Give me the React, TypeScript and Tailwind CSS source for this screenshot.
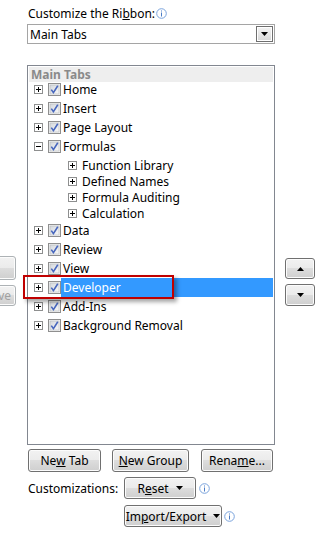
import React from 'react';

const FONT = { fontFamily: '"Segoe UI", "Noto Sans", "Open Sans", sans-serif' };

const InfoIcon = () => (
  <svg width="11" height="11" viewBox="0 0 11 11" className="shrink-0">
    <circle cx="5.5" cy="5.5" r="4.8" fill="#fff" stroke="#7aa3dc" strokeWidth="1" />
    <rect x="5" y="2.5" width="1" height="1" fill="#4a7cc6" />
    <rect x="5" y="4.5" width="1" height="4" fill="#4a7cc6" />
  </svg>
);

const ExpandBox = ({ open = false }: { open?: boolean }) => (
  <svg width="9" height="9" viewBox="0 0 9 9" className="shrink-0">
    <rect x="0.5" y="0.5" width="8" height="8" fill="#fff" stroke="#8e8f8f" />
    <rect x="2" y="4" width="5" height="1" fill="#000" />
    {!open && <rect x="4" y="2" width="1" height="5" fill="#000" />}
  </svg>
);

const CheckBox = () => (
  <svg width="13" height="13" viewBox="0 0 13 13" className="shrink-0">
    <defs>
      <linearGradient id="cbg" x1="0" y1="0" x2="1" y2="1">
        <stop offset="0" stopColor="#d3d7dc" />
        <stop offset="1" stopColor="#f8f8f8" />
      </linearGradient>
    </defs>
    <rect x="0.5" y="0.5" width="12" height="12" fill="#f4f4f4" stroke="#8f8f8f" />
    <rect x="2" y="2" width="9" height="9" fill="url(#cbg)" stroke="#b4b8bd" strokeWidth="0.6" />
    <path d="M3.3 6.6 L5.4 9.6 L9.8 2.8" fill="none" stroke="#4766bd" strokeWidth="1.6" />
  </svg>
);

const Arrow = ({ up = false }: { up?: boolean }) => (
  <svg width="7" height="4" viewBox="0 0 7 4">
    <path d={up ? 'M3.5 0 L7 4 L0 4 Z' : 'M0 0 L7 0 L3.5 4 Z'} fill="#000" />
  </svg>
);

const btnBase =
  'flex items-center justify-center rounded-[3px] border bg-[linear-gradient(#f2f2f2_0%,#ebebeb_49%,#dddddd_50%,#cfcfcf_100%)] text-[12px] shadow-[inset_0_0_0_1px_#fcfcfc]';
const btn = `${btnBase} border-[#707070] text-black`;
const btnOff = `${btnBase} border-[#adb2b5] text-[#a0a0a0]`;

const TopRow = ({ label, open = false, selected = false }: { label: string; open?: boolean; selected?: boolean }) => (
  <div className="flex h-[19px] items-center">
    <div className="ml-[6px]">
      <ExpandBox open={open} />
    </div>
    <div className="ml-[5px]">
      <CheckBox />
    </div>
    <div
      className={`flex h-[19px] flex-1 items-center pl-[2px] ${selected ? 'mr-[1px] bg-[#3399ff] text-white' : 'text-black'}`}
    >
      {label}
    </div>
  </div>
);

const SubRow = ({ label }: { label: string }) => (
  <div className="flex h-[16px] items-center">
    <div className="ml-[40px]">
      <ExpandBox />
    </div>
    <span className="ml-[5px]">{label}</span>
  </div>
);

export default function App() {
  return (
    <div className="relative h-[535px] w-[319px] overflow-hidden bg-white text-[12px] leading-[15px] text-black" style={FONT}>
      <div className="pl-[27px] pt-[6px]">
        <div className="flex h-[15px] items-center pl-[1px]">
          <span>
            Customize the Ri<span className="underline">b</span>bon:
          </span>
          <span className="ml-[1px]">
            <InfoIcon />
          </span>
        </div>

        <div className="mt-[3px] flex h-[20px] w-[248px] items-center border border-[#a5a5a5] bg-white">
          <span className="flex-1 pl-[2px]">Main Tabs</span>
          <div className="mr-[1px] flex h-[16px] w-[17px] items-center justify-center border border-[#6f6f6f] bg-[linear-gradient(#f4f4f4,#d6d6d6)] shadow-[inset_0_0_0_1px_#ffffff]">
            <Arrow />
          </div>
        </div>
      </div>

      <div className="mt-[21px] flex">
        <div className="w-[17px] overflow-hidden">
          <div className="-ml-[60px] w-[76px] pt-[191px]">
            <div className={`${btnOff} h-[24px]`} />
            <div className={`${btnOff} mt-[5px] h-[21px] justify-end pr-[4px]`}>ve</div>
          </div>
        </div>

        <div className="relative ml-[10px] h-[380px] w-[248px] border border-[#828790] bg-white">
          <div className="mx-[1px] mt-[1px] flex h-[15px] items-center bg-[#eeeeee] pl-[2px] font-bold text-[#8a8a8a]">
            Main Tabs
          </div>
          <div className="-mt-[2px]">
            <TopRow label="Home" />
            <TopRow label="Insert" />
            <TopRow label="Page Layout" />
            <TopRow label="Formulas" open />
            <div className="pt-[1px]">
              <SubRow label="Function Library" />
              <SubRow label="Defined Names" />
              <SubRow label="Formula Auditing" />
              <SubRow label="Calculation" />
            </div>
            <TopRow label="Data" />
            <TopRow label="Review" />
            <TopRow label="View" />
            <TopRow label="Developer" selected />
            <TopRow label="Add-Ins" />
            <TopRow label="Background Removal" />
          </div>
          <div className="absolute left-[-5px] top-[209px] h-[24px] w-[151px] border-2 border-[#c00000] shadow-[3px_3px_4px_rgba(0,0,0,0.35)]" />
        </div>

        <div className="ml-[10px] w-[30px] pt-[193px]">
          <div className={`${btn} h-[21px]`}>
            <Arrow up />
          </div>
          <div className={`${btn} mt-[5px] h-[22px]`}>
            <Arrow />
          </div>
        </div>
      </div>

      <div className="pl-[28px]">
        <div className="mt-[4px] flex h-[23px]">
          <div className={`${btn} w-[73px]`}>
            <span>
              Ne<span className="underline">w</span> Tab
            </span>
          </div>
          <div className={`${btn} ml-[11px] w-[77px]`}>
            <span>
              <span className="underline">N</span>ew Group
            </span>
          </div>
          <div className={`${btn} ml-[12px] w-[72px]`}>
            <span>
              Rena<span className="underline">m</span>e...
            </span>
          </div>
        </div>

        <div className="mt-[5px] flex h-[22px] items-center">
          <span className="w-[96px]">Customizations:</span>
          <div className={`${btn} h-[22px] w-[72px] gap-[7px]`}>
            <span>
              R<span className="underline">e</span>set
            </span>
            <Arrow />
          </div>
          <span className="ml-[3px]">
            <InfoIcon />
          </span>
        </div>

        <div className="mt-[6px] flex h-[22px] items-center pl-[96px]">
          <div className={`${btn} h-[22px] w-[98px] gap-[7px]`}>
            <span>
              Im<span className="underline">p</span>ort/Export
            </span>
            <Arrow />
          </div>
          <span className="ml-[2px]">
            <InfoIcon />
          </span>
        </div>
      </div>
    </div>
  );
}
